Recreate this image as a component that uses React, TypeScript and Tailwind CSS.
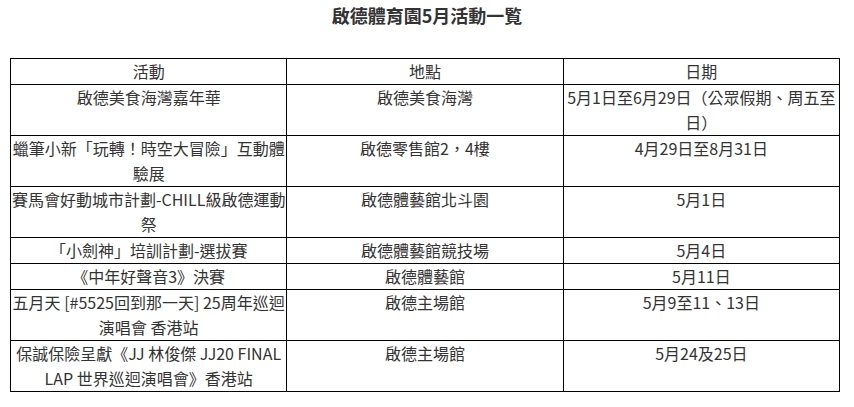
// 啟德體育園 5月活動一覧 table

const rows: [string, string, string][] = [
  ['啟德美食海灣嘉年華', '啟德美食海灣', '5月1日至6月29日（公眾假期、周五至日）'],
  ['蠟筆小新「玩轉！時空大冒險」互動體驗展', '啟德零售館2，4樓', '4月29日至8月31日'],
  ['賽馬會好動城市計劃-CHILL級啟德運動祭', '啟德體藝館北斗園', '5月1日'],
  ['「小劍神」培訓計劃-選拔賽', '啟德體藝館競技場', '5月4日'],
  ['《中年好聲音3》決賽', '啟德體藝館', '5月11日'],
  ['五月天 [#5525回到那一天] 25周年巡迴演唱會 香港站', '啟德主場館', '5月9至11、13日'],
  ['保誠保險呈獻《JJ 林俊傑 JJ20 FINAL LAP 世界巡迴演唱會》香港站', '啟德主場館', '5月24及25日'],
]

export default function App() {
  return (
    <div
      className="w-[854px] h-[407px] bg-white text-[#333]"
      style={{ fontFamily: '"Noto Sans CJK TC", "Noto Sans", sans-serif' }}
    >
      <h1 className="pt-[3px] text-center text-[18px] leading-[25px] font-semibold text-[#333]">
        啟德體育園5月活動一覧
      </h1>
      <table className="mt-[30px] ml-[10px] w-[830px] table-fixed border-collapse border border-black text-[16px] leading-[25px]">
        <thead>
          <tr>
            <th className="w-1/3 border border-black p-0 font-normal text-center align-top">活動</th>
            <th className="w-1/3 border border-black p-0 font-normal text-center align-top">地點</th>
            <th className="w-1/3 border border-black p-0 font-normal text-center align-top">日期</th>
          </tr>
        </thead>
        <tbody>
          {rows.map((r, i) => (
            <tr key={i}>
              {r.map((c, j) => (
                <td key={j} className="border border-black p-0 text-center align-top">
                  {c}
                </td>
              ))}
            </tr>
          ))}
        </tbody>
      </table>
    </div>
  )
}
